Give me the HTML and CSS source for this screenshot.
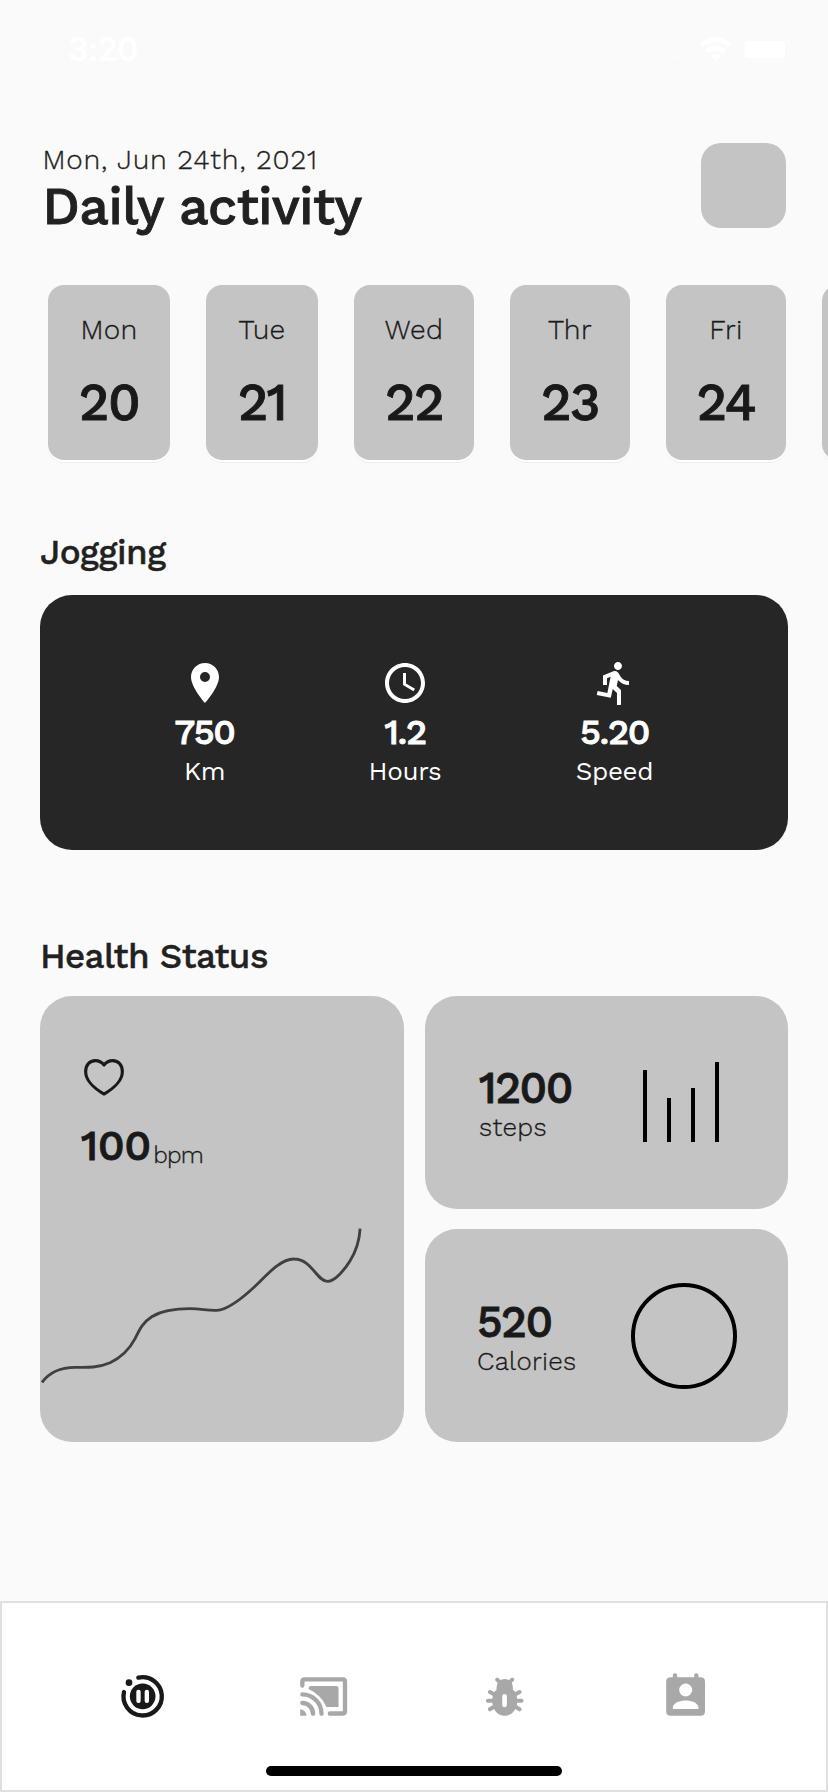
FILE: index.html
```html
<!DOCTYPE html>
<html lang="en">
<head>
<meta charset="utf-8">
<title>Daily activity</title>
<link rel="stylesheet" href="styles.css">
</head>
<body>
<div class="screen">
  <div class="status">
    <span class="time">3:20</span>
    <svg class="indicators" viewBox="714 105 426 85">
      <g fill="#fbfbfb"><circle cx="727" cy="171" r="10"/><circle cx="757" cy="171" r="10"/><circle cx="787" cy="171" r="10"/><circle cx="817" cy="171" r="10"/></g>
      <g fill="none" stroke="#fff" stroke-width="15"><path d="M862 136Q905 101 948 136"/><path d="M879 155Q905 134 931 155"/></g>
      <path fill="#fff" d="M890 168Q905 158 920 168L905 183Z"/>
      <rect x="983" y="114" width="141" height="71" rx="19" fill="none" stroke="#fcfcfc" stroke-width="4"/>
      <rect x="992" y="123" width="121" height="52" rx="11" fill="#fff"/>
      <path fill="#fcfcfc" d="M1130 139q9 3 9 11t-9 11z"/>
    </svg>
  </div>

  <header class="header">
    <div>
      <div class="date">Mon, Jun 24th, 2021</div>
      <h1 class="title">Daily activity</h1>
    </div>
    <div class="avatar"></div>
  </header>

  <div class="days">
    <div class="day day-first"><span class="day-name">Mon</span><span class="day-num">20</span></div>
    <div class="day day-narrow"><span class="day-name">Tue</span><span class="day-num">21</span></div>
    <div class="day"><span class="day-name">Wed</span><span class="day-num">22</span></div>
    <div class="day"><span class="day-name">Thr</span><span class="day-num">23</span></div>
    <div class="day"><span class="day-name">Fri</span><span class="day-num">24</span></div>
    <div class="day"></div>
  </div>

  <h2 class="heading jog-heading">Jogging</h2>
  <section class="jogging">
    <div class="metric metric-km">
      <svg viewBox="0 0 24 24"><path d="M12 2C8.13 2 5 5.13 5 9c0 5.25 7 13 7 13s7-7.75 7-13c0-3.87-3.13-7-7-7zm0 9.5a2.5 2.5 0 1 1 0-5 2.5 2.5 0 0 1 0 5z"/></svg>
      <span class="metric-num">750</span><span class="metric-label">Km</span>
    </div>
    <div class="metric metric-hours">
      <svg viewBox="0 0 24 24"><path d="M11.99 2C6.47 2 2 6.48 2 12s4.47 10 9.99 10C17.52 22 22 17.52 22 12S17.52 2 11.99 2zM12 20c-4.42 0-8-3.58-8-8s3.58-8 8-8 8 3.58 8 8-3.58 8-8 8zm.5-13H11v6l5.25 3.15.75-1.23-4.5-2.67z"/></svg>
      <span class="metric-num">1.2</span><span class="metric-label">Hours</span>
    </div>
    <div class="metric metric-speed">
      <svg viewBox="0 0 24 24"><path d="M13.49 5.48c1.1 0 2-.9 2-2s-.9-2-2-2-2 .9-2 2 .9 2 2 2zm-3.6 13.9l1-4.4 2.1 2v6h2v-7.5l-2.1-2 .6-3c1.3 1.5 3.3 2.5 5.5 2.5v-2c-1.9 0-3.5-1-4.3-2.4l-1-1.6c-.4-.6-1-1-1.7-1-.3 0-.5.1-.8.1l-5.2 2.2v4.7h2v-3.4l1.8-.7-1.6 8.1-4.9-1-.4 2 7 1.4z"/></svg>
      <span class="metric-num">5.20</span><span class="metric-label">Speed</span>
    </div>
  </section>

  <h2 class="heading health-heading">Health Status</h2>
  <section class="health">
    <div class="card heart">
      <svg class="heart-icon" viewBox="0 0 120 110"><path fill="none" stroke="#191919" stroke-width="9.5" stroke-linejoin="round" d="M60 18C52 8 44 5 34 5C16 5 5 19 5 38C5 62 28 87 60 105C92 87 115 62 115 38C115 19 104 5 86 5C76 5 68 8 60 18Z"/></svg>
      <div class="rate"><span class="rate-num">100</span><span class="rate-unit">bpm</span></div>
      <svg class="trend" viewBox="60 100 1090 500"><path fill="none" stroke="#404040" stroke-width="8.5" d="M66 578C90 545 125 533 165 533C205 534 235 534 270 519C305 503 330 475 345 447C358 420 368 398 395 381C430 360 470 357 510 357C545 357 560 363 590 362C625 360 680 314 715 280C745 250 785 207 822 208C875 208 890 275 922 275C945 275 975 238 990 213C1008 185 1018 150 1020 117"/></svg>
    </div>
    <div class="card stat steps">
      <div><div class="stat-num">1200</div><div class="stat-label">steps</div></div>
      <div class="bars"><i class="bar bar-a"></i><i class="bar bar-b"></i><i class="bar bar-c"></i><i class="bar bar-d"></i></div>
    </div>
    <div class="card stat calories">
      <div><div class="stat-num">520</div><div class="stat-label">Calories</div></div>
      <div class="ring"></div>
    </div>
  </section>

  <nav class="nav">
    <svg viewBox="350 243 154 154" color="#191919">
      <g fill="none" stroke="currentColor" stroke-width="13" stroke-linecap="round"><path d="M414 263A57.5 57.5 0 1 1 371 306"/></g>
      <circle cx="386" cy="278" r="10" fill="currentColor"/><circle cx="427" cy="319" r="38.5" fill="currentColor"/>
      <rect x="408" y="299" width="13" height="40" rx="6" fill="#fff"/><rect x="433" y="299" width="13" height="40" rx="6" fill="#fff"/>
    </svg>
    <svg viewBox="893.5 243 154 154" color="#a8a8a8">
      <g fill="none" stroke="currentColor" stroke-width="13" stroke-linecap="round"><path d="M906.5 287V275Q906.5 268 913 268H1028Q1034.5 268 1034.5 275V364Q1034.5 370.5 1028 370.5H989"/><path d="M906.5 313A58 58 0 0 1 964 371"/><path d="M906.5 339A32 32 0 0 1 938.5 371"/></g>
      <path fill="currentColor" d="M900 358A20 20 0 0 1 919 377.5H900ZM932 288H1008Q1015 288 1015 295V351H979Q963 314 925 297Q926 288 932 288Z"/>
    </svg>
    <svg viewBox="194.3 243 154 154" color="#a8a8a8">
      <g stroke="currentColor" stroke-width="12" stroke-linecap="round"><path d="M249 269L262 282M294 269L281 282M221 332H322M227 306L245 316M316 306L298 316M227 358L245 347M316 358L298 347"/></g>
      <path fill="currentColor" d="M247 299Q246 282 255 273Q262 267 271.5 267Q281 267 288 273Q297 282 296 299Q309 308 309 333C309 360 292 377 271.5 377S234 360 234 333Q234 308 247 299Z"/>
      <rect x="264" y="312" width="14" height="40" rx="7" fill="#fff"/>
    </svg>
    <svg viewBox="737.5 243 154 154" color="#a8a8a8">
      <path fill="currentColor" d="M776 262V256a6.5 6.5 0 0 1 13 0V262H840V256a6.5 6.5 0 0 1 13 0V262H859Q872.5 262 872.5 275V364Q872.5 377.5 859 377.5H770Q756 377.5 756 364V275Q756 262 770 262Z"/>
      <circle cx="814.5" cy="300" r="19.5" fill="#fff"/><path fill="#fff" d="M776 357V351C779 338 797 331.5 814.5 331.5S850 338 853 351V357Z"/>
    </svg>
    <div class="home-indicator"></div>
  </nav>
</div>
</body>
</html>
```
FILE: styles.css
```css
* { box-sizing: border-box; }
body {
  margin: 0;
  background: #fafafa;
  color: #212121;
  font-family: "Work Sans", Inter, sans-serif;
}
h1, h2 { margin: 0; }
svg { display: block; }
.screen {
  width: 828px;
  height: 1792px;
  display: flex;
  flex-direction: column;
  overflow: hidden;
}

.status {
  height: 142.5px;
  padding: 30px 34px 0 68px;
  display: flex;
  justify-content: space-between;
  align-items: flex-start;
  color: #fff;
}
.time { font-family: Inter, sans-serif; font-size: 32px; line-height: 40px; font-weight: 600; letter-spacing: -0.4px; }
.indicators { width: 142px; height: 28.333px; margin-top: 5px; }

.header {
  height: 142.5px;
  padding: 1px 42.5px 0 42.5px;
  display: flex;
  justify-content: space-between;
}
.date { font-size: 28px; line-height: 32px; font-weight: 300; letter-spacing: 0.87px; }
.date, .day-name, .rate-unit, .stat-label { -webkit-text-stroke: 0.3px currentColor; }
.title { font-size: 52px; line-height: 61px; font-weight: 500; letter-spacing: -0.5px; }
.title, .day-num, .rate-num, .stat-num { -webkit-text-stroke: 0.9px currentColor; }
.avatar { width: 85px; height: 85px; margin-top: -1px; border-radius: 20px; background: #c4c4c4; }

.days { display: flex; gap: 36px; padding-left: 48px; height: 175px; color: #191919; }
.day {
  width: 120px;
  flex: none;
  padding-top: 28.5px;
  display: flex;
  flex-direction: column;
  align-items: center;
  gap: 27.5px;
  border-radius: 16px;
  background: #c4c4c4;
  box-shadow: 0 2px 0 #fff, 0 3px 1px #ededed;
}
.day-first { width: 122px; }
.day-narrow { width: 112px; }
.day-name { font-size: 28px; line-height: 32px; font-weight: 300; letter-spacing: 0.4px; }
.day-num { font-size: 52px; line-height: 60px; font-weight: 500; letter-spacing: -1.4px; }

.heading { font-size: 35px; line-height: 40px; font-weight: 500; padding-left: 40px; -webkit-text-stroke: 0.4px currentColor; }
.jog-heading { margin-top: 72px; letter-spacing: -0.5px; }
.health-heading { margin-top: 85.5px; letter-spacing: -0.6px; }

.jogging {
  height: 255px;
  margin: 23px 40px 0;
  padding-top: 64px;
  display: flex;
  justify-content: space-evenly;
  border-radius: 32px;
  background: #262626;
  color: #fff;
}
.metric { display: flex; flex-direction: column; align-items: center; white-space: nowrap; }
.metric-km { width: 60px; }
.metric-hours { width: 72px; }
.metric-speed { width: 78px; }
.metric svg { width: 48px; height: 48px; fill: #fff; }
.metric-num { margin-top: 5px; font-size: 36px; line-height: 40px; font-weight: 500; letter-spacing: -1.4px; -webkit-text-stroke: 0.9px currentColor; }
.metric-label { margin-top: 3.5px; font-size: 26px; line-height: 30px; font-weight: 400; letter-spacing: -0.3px; }

.health {
  margin: 20.5px 40px 0;
  display: grid;
  grid-template-columns: 363.5px 363.5px;
  grid-template-rows: 212.5px 212.5px;
  gap: 20.7px 21px;
  color: #191919;
}
.card { border-radius: 32px; background: #c4c4c4; overflow: hidden; }
.heart { grid-row: span 2; padding-top: 63px; }
.heart-icon { width: 40px; height: 36.7px; margin-left: 44px; }
.rate { display: flex; align-items: flex-start; margin: 24.7px 0 0 41px; height: 50px; }
.rate-num { font-size: 43px; line-height: 50px; font-weight: 500; letter-spacing: -0.5px; }
.rate-unit { font-size: 24px; line-height: 30px; font-weight: 300; margin: 20px 0 0 2.5px; letter-spacing: -0.8px; }
.trend { width: 363.5px; height: 166.7px; margin-top: 53px; }

.stat { display: flex; justify-content: space-between; }
.stat-num { font-size: 44px; line-height: 50px; font-weight: 500; letter-spacing: -1.5px; }
.stat-label { font-size: 26px; line-height: 30px; font-weight: 300; letter-spacing: 0.3px; }
.steps { padding: 66.5px 69px 0 54.5px; }
.steps .stat-label { margin-top: -0.5px; }
.bars { display: flex; align-items: flex-end; gap: 19.7px; height: 79.5px; }
.bar { width: 4.3px; background: #000; }
.bar-a { height: 72px; }
.bar-b { height: 44px; }
.bar-c { height: 54px; }
.bar-d { height: 80px; }
.calories { padding: 67.5px 51.5px 0 52.5px; }
.calories .stat-label { margin-top: -0.5px; }
.ring { width: 106px; height: 106px; margin-top: -14px; border: 4px solid #000; border-radius: 50%; }

.nav {
  position: relative;
  margin-top: auto;
  height: 191px;
  border: 2px solid #e0e0e0;
  background: #fff;
  display: flex;
  gap: 129.67px;
  padding: 68px 0 0 114.67px;
}
.nav svg { width: 51.33px; height: 51.33px; flex: none; }
.home-indicator {
  position: absolute;
  left: 264px;
  bottom: 14px;
  width: 296px;
  height: 10px;
  border-radius: 5px;
  background: #000;
}
```
